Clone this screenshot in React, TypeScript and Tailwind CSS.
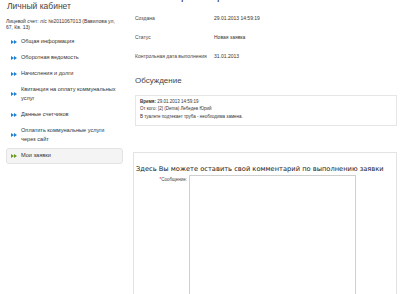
const menu = [
  { label: "Общая информация" },
  { label: "Оборотная ведомость" },
  { label: "Начисления и долги" },
  { label: "Квитанция на оплату коммунальных услуг" },
  { label: "Данные счетчиков" },
  { label: "Оплатить коммунальные услуги через сайт" },
  { label: "Мои заявки", active: true },
];

const rows = [
  { label: "Создана", value: "29.01.2013 14:59:19" },
  { label: "Статус", value: "Новая заявка" },
  { label: "Контрольная дата выполнения", value: "31.01.2013" },
];

const Arrows = ({ color }: { color: string }) => (
  <svg width="6" height="4" viewBox="0 0 6 4" className="shrink-0">
    <path d="M0 0 L3 2 L0 4 Z M3 0 L6 2 L3 4 Z" fill={color} />
  </svg>
);

export default function App() {
  return (
    <div className="w-[403px] h-[294px] overflow-hidden bg-white text-[#333] font-['Liberation_Sans',Arial,sans-serif] flex">
      {/* Left column */}
      <aside className="w-[133px] shrink-0 pl-[6px] pr-[10px]">
        <h1 className="text-[8.5px] leading-[10px] mt-[1px] pl-[1px] text-[#444]">Личный кабинет</h1>
        <p className="text-[5px] leading-[6.5px] mt-[6.5px] text-[#333]">
          Лицевой счет: л/с №2011067013 (Вавилова ул, 67, Кв. 13)
        </p>
        <ul className="mt-[3px]">
          {menu.map((m) => (
            <li
              key={m.label}
              className={
                m.active
                  ? "flex items-center gap-[4px] px-[4px] py-[2.5px] border border-[#e3e3e3] rounded-[3px] bg-[#f4f4f4] text-[5.6px] leading-[9px] text-[#333]"
                  : "flex items-center gap-[4px] px-[4px] py-[2.5px] border border-transparent text-[5.6px] leading-[9px] text-[#333]"
              }
            >
              <Arrows color={m.active ? "#6a9a1f" : "#1f7fd4"} />
              <span>{m.label}</span>
            </li>
          ))}
        </ul>
      </aside>

      {/* Right column */}
      <main className="flex-1 pr-[6px]">
        <div className="h-[3px] overflow-hidden">
          <h2 className="-mt-[9.5px] text-[11px] leading-[11px] pl-[40px] text-[#333]">Просмотр заявки</h2>
        </div>

        <div className="mt-[6.5px] ml-[2px]">
          {rows.map((r) => (
            <div key={r.label} className="flex items-center h-[19px] text-[5px]">
              <span className="w-[79px] shrink-0 text-[#444]">{r.label}</span>
              <span className="text-[#333]">{r.value}</span>
            </div>
          ))}
        </div>

        <h3 className="mt-[9.5px] ml-[2px] text-[8px] leading-[10px] text-[#444]">Обсуждение</h3>

        <div className="mt-[8.5px] ml-[2px] h-[31px] border border-[#e6e6e6] px-[4px] pt-[2.5px] text-[4.5px] leading-[7px]">
          <div>
            <b>Время:</b> 29.01.2013 14:59:19
          </div>
          <div>От кого: [2] (Dema) Лебедев Юрий</div>
          <div className="mt-[0.5px]">В туалете подтекает труба - необходима замена.</div>
        </div>

        <div className="mt-[26px] h-[200px] border border-[#e3e3e3] pt-[11px] pl-[2px]">
          <h4 className="text-[6.7px] leading-[10px] text-[#222] font-['DejaVu_Sans',Verdana,sans-serif]">
            Здесь Вы можете оставить свой комментарий по выполнению заявки
          </h4>
          <div className="flex mt-[1px]">
            <label className="w-[51px] shrink-0 text-right text-[4.5px] leading-[6px] mt-[2px] text-[#444]">
              <span className="text-[#e02020]">*</span>Сообщение:
            </label>
            <textarea className="ml-[2px] w-[167px] h-[150px] border border-[#cfcfcf] resize-none" />
          </div>
        </div>
      </main>
    </div>
  );
}
